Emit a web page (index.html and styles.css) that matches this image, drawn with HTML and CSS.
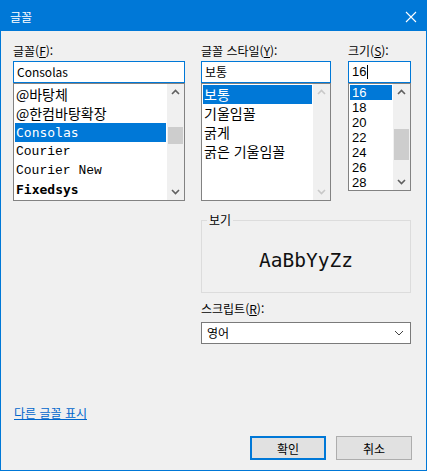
FILE: index.html
```html
<!DOCTYPE html>
<html lang="ko">
<head>
<meta charset="utf-8">
<title>글꼴</title>
<link rel="stylesheet" href="styles.css">
</head>
<body>
<div class="window">
  <div class="titlebar">
    <span class="title">글꼴</span>
    <svg class="close" width="12" height="12" viewBox="0 0 12 12"><path d="M1 1 L11 11 M11 1 L1 11" stroke="#fff" stroke-width="1.1" fill="none"/></svg>
  </div>
  <div class="content">
    <div class="pickers">
      <div class="picker font-picker">
        <div class="lbl">글꼴(<u>F</u>):</div>
        <div class="edit">Consolas</div>
        <div class="list font-list">
          <ul class="items">
            <li class="kr">@바탕체</li>
            <li class="kr">@한컴바탕확장</li>
            <li class="mono sel">Consolas</li>
            <li class="courier">Courier</li>
            <li class="courier">Courier New</li>
            <li class="fixed">Fixedsys</li>
          </ul>
          <div class="vscroll">
            <svg class="arrow" width="17" height="17" viewBox="0 0 17 17"><polyline points="5,10 8.5,6.5 12,10" fill="none" stroke="#606060" stroke-width="1.6"/></svg>
            <div class="track"><div class="thumb font-thumb"></div></div>
            <svg class="arrow" width="17" height="17" viewBox="0 0 17 17"><polyline points="5,7 8.5,10.5 12,7" fill="none" stroke="#606060" stroke-width="1.6"/></svg>
          </div>
        </div>
      </div>
      <div class="picker style-picker">
        <div class="lbl">글꼴 스타일(<u>Y</u>):</div>
        <div class="edit">보통</div>
        <div class="list style-list">
          <ul class="items">
            <li class="kr sel">보통</li>
            <li class="kr">기울임꼴</li>
            <li class="kr">굵게</li>
            <li class="kr">굵은 기울임꼴</li>
          </ul>
          <div class="vscroll">
            <svg class="arrow" width="17" height="17" viewBox="0 0 17 17"><polyline points="5,10 8.5,6.5 12,10" fill="none" stroke="#c8c8c8" stroke-width="1.6"/></svg>
            <div class="track"></div>
            <svg class="arrow" width="17" height="17" viewBox="0 0 17 17"><polyline points="5,7 8.5,10.5 12,7" fill="none" stroke="#c8c8c8" stroke-width="1.6"/></svg>
          </div>
        </div>
      </div>
      <div class="picker size-picker">
        <div class="lbl">크기(<u>S</u>):</div>
        <div class="edit size-edit">16<span class="caret"></span></div>
        <div class="list size-list">
          <ul class="items">
            <li class="sel">16</li>
            <li>18</li>
            <li>20</li>
            <li>22</li>
            <li>24</li>
            <li>26</li>
            <li>28</li>
          </ul>
          <div class="vscroll">
            <svg class="arrow" width="17" height="17" viewBox="0 0 17 17"><polyline points="5,10 8.5,6.5 12,10" fill="none" stroke="#606060" stroke-width="1.6"/></svg>
            <div class="track"><div class="thumb size-thumb"></div></div>
            <svg class="arrow" width="17" height="17" viewBox="0 0 17 17"><polyline points="5,7 8.5,10.5 12,7" fill="none" stroke="#606060" stroke-width="1.6"/></svg>
          </div>
        </div>
      </div>
    </div>

    <div class="lower">
      <div class="preview">
        <span class="legend">보기</span>
        <div class="sample">AaBbYyZz</div>
      </div>
      <div class="lbl script-lbl">스크립트(<u>R</u>):</div>
      <div class="select">
        <span>영어</span>
        <svg width="10" height="6" viewBox="0 0 10 6"><polyline points="1,1 5,5 9,1" fill="none" stroke="#444" stroke-width="1"/></svg>
      </div>
    </div>

    <a class="more" href="#">다른 글꼴 표시</a>

    <div class="buttons">
      <button class="btn default">확인</button>
      <button class="btn">취소</button>
    </div>
  </div>
</div>
</body>
</html>
```

FILE: styles.css
```css
html, body {
  margin: 0;
  padding: 0;
  background: #f0f0f0;
}

.window {
  width: 427px;
  height: 471px;
  box-sizing: border-box;
  border: 1px solid #0078d7;
  background: #f0f0f0;
  display: flex;
  flex-direction: column;
  font-family: "Noto Sans CJK KR", "Noto Sans", sans-serif;
  font-size: 12px;
  color: #000;
}

.titlebar {
  height: 30px;
  flex: none;
  background: #0078d7;
  color: #fff;
  display: flex;
  align-items: center;
  justify-content: space-between;
  padding: 0 9px 0 9px;
}

.title {
  line-height: 16px;
  margin-top: 1px;
}

.close {
  display: block;
  margin-top: 1px;
}

.content {
  flex: 1;
  display: flex;
  flex-direction: column;
  padding: 12px 14px 10px 12px;
}

.pickers {
  display: flex;
}

.font-picker { width: 172px; }
.style-picker { width: 130px; margin-left: 16px; }
.size-picker { width: 63px; margin-left: 17px; }

.lbl {
  height: 16px;
  line-height: 16px;
  margin-bottom: 2px;
  white-space: nowrap;
}

.edit {
  height: 22px;
  box-sizing: border-box;
  border: 1px solid #0078d7;
  background: #fff;
  padding: 0 3px;
  line-height: 20px;
  white-space: nowrap;
}

.size-edit {
  font-family: "Liberation Sans", sans-serif;
  font-size: 13px;
}

.caret {
  display: inline-block;
  width: 1px;
  height: 14px;
  background: #000;
  vertical-align: -3px;
  margin-left: 1px;
}

.list {
  box-sizing: border-box;
  border: 1px solid #828282;
  background: #fff;
  display: flex;
}

.font-list, .style-list { height: 118px; }
.size-list { height: 108px; }

.items {
  flex: 1;
  list-style: none;
  margin: 0;
  padding: 1px 1px 0 1px;
  overflow: hidden;
  min-width: 0;
}

.items li {
  height: 19px;
  line-height: 19px;
  padding-left: 1px;
  white-space: nowrap;
  overflow: hidden;
}

.size-list .items li {
  height: 15px;
  line-height: 15px;
  padding-left: 2px;
  font-family: "Liberation Sans", sans-serif;
  font-size: 13px;
}

.items li.kr { font-size: 14px; }

.items li.mono {
  font-family: "DejaVu Sans Mono", monospace;
  font-size: 13px;
}

.items li.courier {
  font-family: "Liberation Mono", monospace;
  font-size: 13px;
}

.items li.fixed {
  font-family: "DejaVu Sans Mono", monospace;
  font-size: 13px;
  font-weight: bold;
}

.items li.sel {
  background: #0078d7;
  color: #fff;
}

.vscroll {
  width: 17px;
  flex: none;
  background: #f0f0f0;
  display: flex;
  flex-direction: column;
}

.arrow {
  display: block;
  flex: none;
}

.track {
  flex: 1;
}

.thumb {
  background: #cdcdcd;
  margin: 0 1px;
}

.font-thumb { margin-top: 26px; height: 17px; }
.size-thumb { margin-top: 28px; height: 31px; }

.lower {
  margin-left: 188px;
  width: 210px;
  margin-top: 19px;
}

.preview {
  position: relative;
  height: 73px;
  box-sizing: border-box;
  border: 1px solid #dcdcdc;
}

.legend {
  position: absolute;
  left: 5px;
  top: -9px;
  padding: 0 2px;
  line-height: 16px;
  background: #f0f0f0;
}

.sample {
  text-align: center;
  padding-top: 28px;
  line-height: 24px;
  font-family: "DejaVu Sans Mono", monospace;
  font-size: 19.5px;
  color: #111;
}

.script-lbl {
  margin-top: 8px;
  margin-bottom: 5px;
}

.select {
  height: 22px;
  box-sizing: border-box;
  border: 1px solid #7a7a7a;
  background: #fff;
  display: flex;
  align-items: center;
  justify-content: space-between;
  padding: 0 6px 0 5px;
  line-height: 20px;
}

.select svg {
  display: block;
}

.more {
  margin-top: auto;
  align-self: flex-start;
  color: #0066cc;
  text-decoration: underline;
  line-height: 16px;
  margin-left: 1px;
}

.buttons {
  display: flex;
  justify-content: flex-end;
  gap: 10px;
  margin-top: 15px;
}

.btn {
  width: 76px;
  height: 24px;
  box-sizing: border-box;
  border: 1px solid #adadad;
  background: #e1e1e1;
  font-family: "Noto Sans CJK KR", sans-serif;
  font-size: 12px;
  color: #000;
  padding: 0;
  margin: 0;
}

.btn.default {
  border: 2px solid #0078d7;
}
```
